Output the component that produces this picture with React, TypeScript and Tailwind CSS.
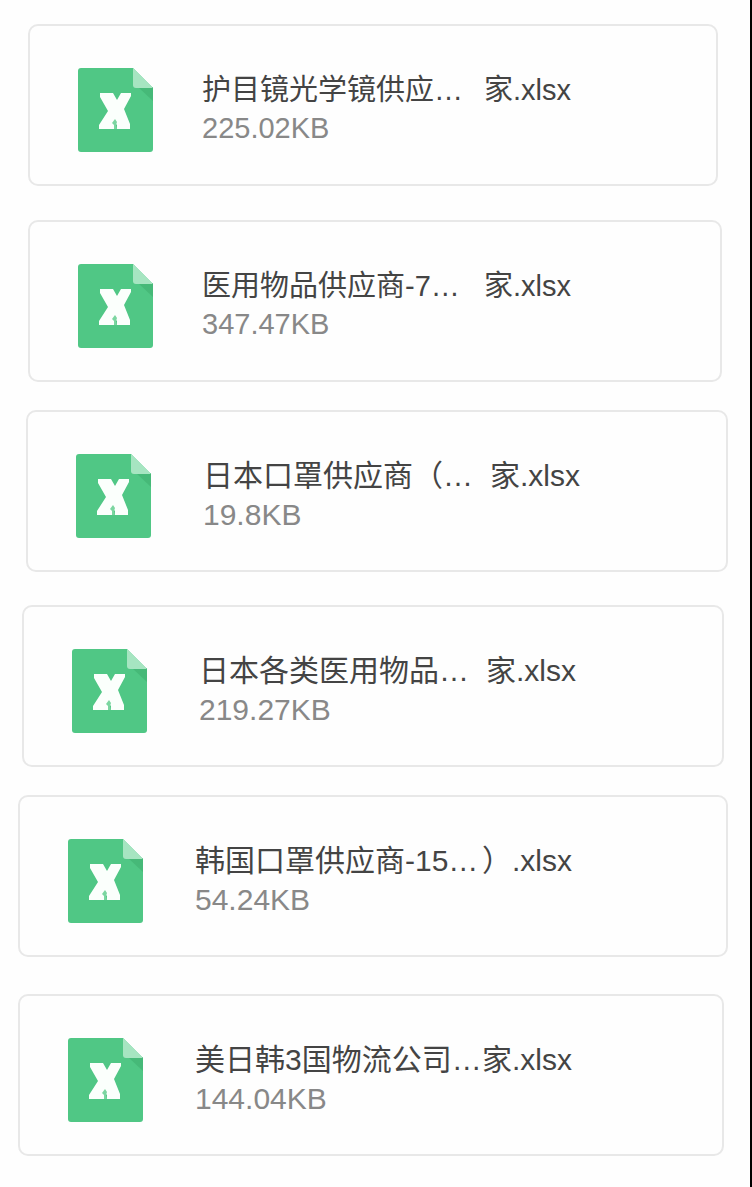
interface SharedFile {
  head: string;
  tail: string;
  size: string;
  spacing: string;
  large?: boolean;
}

const FILES: SharedFile[] = [
  { head: '护目镜光学镜供应…', tail: '家.xlsx', size: '225.02KB', spacing: 'mt-6 ml-7 mr-8' },
  { head: '医用物品供应商-7…', tail: '家.xlsx', size: '347.47KB', spacing: 'mt-[34px] ml-7 mr-7' },
  { head: '日本口罩供应商（…', tail: '家.xlsx', size: '19.8KB', spacing: 'mt-7 ml-[26px] mr-[22px]', large: true },
  { head: '日本各类医用物品…', tail: '家.xlsx', size: '219.27KB', spacing: 'mt-[33px] ml-[22px] mr-[26px]', large: true },
  { head: '韩国口罩供应商-15…', tail: '）.xlsx', size: '54.24KB', spacing: 'mt-7 ml-[18px] mr-[22px]', large: true },
  { head: '美日韩3国物流公司…', tail: '家.xlsx', size: '144.04KB', spacing: 'mt-[37px] ml-[18px] mr-[26px]', large: true },
];

function SheetIcon() {
  return (
    <svg className="w-[75px] h-[84px] shrink-0" viewBox="0 0 75 84" aria-hidden="true">
      <path d="M3 0H55L75 20V81a3 3 0 0 1-3 3H3a3 3 0 0 1-3-3V3a3 3 0 0 1 3-3Z" fill="#50c785" />
      <path d="M60 19L75 33V19Z" fill="#46b978" />
      <path d="M55 0L75 20H58a3 3 0 0 1-3-3Z" fill="#a6e5c1" />
      <path
        d="M22 25H35L39 32L43 25H53V28L46 41L52 56V61H39V56L37 58L36 61H21V57L30 43L22 29Z"
        fill="#fbfffc"
      />
      <path d="M34 55L37 51L39 54L38 57L39 61H36V57Z" fill="#7bd6a0" />
    </svg>
  );
}

function FileCard({ file }: { file: SharedFile }) {
  return (
    <li
      className={`flex items-center rounded-[10px] border-2 border-[#e8e8e8] bg-[#fefefe] pt-[42px] pb-8 pl-12 pr-4 ${file.large ? 'gap-[52px]' : 'gap-[49px]'} ${file.spacing}`}
    >
      <SheetIcon />
      <div
        className={`min-w-0 pb-0.5 whitespace-nowrap ${file.large ? 'text-[30px] leading-[39px]' : 'text-[29px] leading-[38px]'}`}
      >
        <p className="flex text-[#444]">
          <span className={`shrink-0 ${file.large ? 'w-[287px]' : 'w-[282px]'}`}>{file.head}</span>
          <span>{file.tail}</span>
        </p>
        <p className="text-[#888]">{file.size}</p>
      </div>
    </li>
  );
}

export default function App() {
  return (
    <main className="min-h-screen border-r-2 border-black bg-[#fefefe] font-['Liberation_Sans','Noto_Sans_CJK_SC',sans-serif]">
      <ul className="flex flex-col pb-[30px]">
        {FILES.map((file) => (
          <FileCard key={file.size} file={file} />
        ))}
      </ul>
    </main>
  );
}
